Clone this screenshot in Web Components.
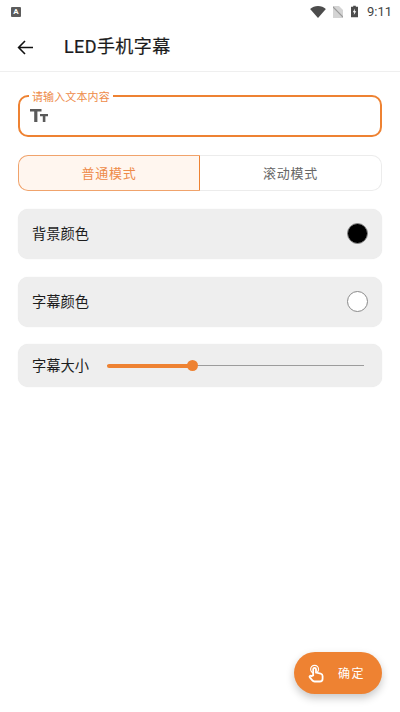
<!DOCTYPE html>
<html lang="zh">
<head>
<meta charset="utf-8">
<style>
  html, body { margin: 0; padding: 0; background: #ffffff; }
  body {
    width: 400px;
    height: 712px;
    overflow: hidden;
    display: flex;
    flex-direction: column;
    font-family: "Roboto", "Noto Sans CJK SC", sans-serif;
  }
  app-content { flex: 1; }
</style>
</head>
<body>
<status-bar></status-bar>
<app-bar>LED手机字幕</app-bar>
<app-content>
  <text-field label="请输入文本内容"></text-field>
  <mode-switch first="普通模式" second="滚动模式"></mode-switch>
  <color-row swatch="#000000">背景颜色</color-row>
  <color-row swatch="#ffffff" style="margin-bottom:17px">字幕颜色</color-row>
  <size-row value="33">字幕大小</size-row>
</app-content>
<confirm-fab>确定</confirm-fab>

<script>
class StatusBar extends HTMLElement {
  connectedCallback() {
    this.attachShadow({ mode: 'open' });
    this.shadowRoot.innerHTML = `
      <style>
        :host { display: flex; height: 23px; padding: 0 8px 0 11px; align-items: center; justify-content: space-between; color: #4a4a4a; }
        .right { display: flex; align-items: center; }
        .note { width: 10px; height: 10px; border-radius: 1px; background: #5c5c5c; color: #fff; font: 700 8px/10px "Roboto", sans-serif; text-align: center; }
        .time { font: 400 13px/16px "Roboto", sans-serif; color: #444; margin-left: 9px; }
        svg { display: block; }
      </style>
      <div class="note">A</div>
      <div class="right">
        <svg width="16" height="12" viewBox="0 0 17 13" style="margin-right:7px"><path d="M0 3.2C2.3 1.2 5.2 0 8.5 0s6.2 1.2 8.5 3.2L8.5 13z" fill="#4c4c4c"/></svg>
        <svg width="10" height="12" viewBox="0 0 10 12" style="margin-right:8px"><path d="M0 0h6l4 4v8H0z" fill="#d4d4d4"/><path d="M0 1l10 10" stroke="#9a9a9a" stroke-width="1.2"/></svg>
        <svg width="7" height="13" viewBox="0 0 8 13"><path d="M2.5 0h3v1H8v12H0V1h2.5z" fill="#4c4c4c"/><path d="M4.6 3 2 7.4h1.7L3.2 10.6 6 6.2H4.2z" fill="#fff"/></svg>
        <span class="time">9:11</span>
      </div>
    `;
  }
}

class AppBar extends HTMLElement {
  connectedCallback() {
    this.attachShadow({ mode: 'open' });
    this.shadowRoot.innerHTML = `
      <style>
        :host { display: flex; align-items: center; height: 48px; border-bottom: 1px solid #efefef; }
        button { border: 0; background: none; padding: 0; margin-left: 17px; width: 17px; height: 17px; }
        svg { display: block; }
        .title { margin-left: 30px; font: 400 18px/24px "Roboto", "Noto Sans CJK SC", sans-serif; -webkit-text-stroke: 0.2px #1c1c1c; color: #1c1c1c; letter-spacing: 0.4px; }
      </style>
      <button type="button" aria-label="back">
        <svg width="17" height="17" viewBox="0 0 17 17" fill="none" stroke="#111" stroke-width="1.6"><path d="M16 8.5H1.6M8 2 1.6 8.5 8 15"/></svg>
      </button>
      <div class="title"><slot></slot></div>
    `;
  }
}

class AppContent extends HTMLElement {
  connectedCallback() {
    this.attachShadow({ mode: 'open' });
    this.shadowRoot.innerHTML = `
      <style>
        :host { display: flex; flex-direction: column; padding: 23px 18px 0; }
      </style>
      <slot></slot>
    `;
  }
}

class TextField extends HTMLElement {
  connectedCallback() {
    this.attachShadow({ mode: 'open' });
    this.shadowRoot.innerHTML = `
      <style>
        :host { display: block; position: relative; height: 42px; border: 2px solid #ee8232; border-radius: 10px; box-sizing: border-box; margin-bottom: 18px; }
        .label { position: absolute; left: 9px; top: -8px; padding: 0 3px; background: #fff; font: 400 11px/14px "Noto Sans CJK SC", sans-serif; letter-spacing: 0.12px; color: #ee8a48; }
        .icon { display: flex; height: 100%; padding: 0 0 1px 10px; box-sizing: border-box; align-items: center; }
        svg { display: block; }
      </style>
      <div class="label">${this.getAttribute('label')}</div>
      <div class="icon">
        <svg width="18" height="13" viewBox="0 0 18 13" fill="#5a5a5a"><path d="M0 0h11.5v2.6H7.4V13H4.2V2.6H0zM10 5h8v2.2h-2.6V13h-2.6V7.2H10z"/></svg>
      </div>
    `;
  }
}

class ModeSwitch extends HTMLElement {
  connectedCallback() {
    this.attachShadow({ mode: 'open' });
    this.shadowRoot.innerHTML = `
      <style>
        :host { display: flex; height: 36px; margin-bottom: 18px; font: 400 13px/34px "Noto Sans CJK SC", sans-serif; letter-spacing: 0.7px; text-align: center; }
        div { box-sizing: border-box; height: 36px; }
        .on { width: 182px; border: 1px solid #f0a36c; border-right-color: #ee8232; border-radius: 10px 0 0 10px; background: #fff6ef; color: #ee8a48; }
        .off { flex: 1; border: 1px solid #ececec; border-left: 0; border-radius: 0 10px 10px 0; background: #fff; color: #666; }
      </style>
      <div class="on">${this.getAttribute('first')}</div>
      <div class="off">${this.getAttribute('second')}</div>
    `;
  }
}

class ColorRow extends HTMLElement {
  connectedCallback() {
    this.attachShadow({ mode: 'open' });
    const swatch = this.getAttribute('swatch');
    this.shadowRoot.innerHTML = `
      <style>
        :host { display: flex; align-items: center; justify-content: space-between; height: 50px; padding: 0 14px; margin-bottom: 18px; border-radius: 10px; background: #eeeeee; box-sizing: border-box; box-shadow: 0 0 1px rgba(0,0,0,0.12); font: 400 14.25px/20px "Noto Sans CJK SC", sans-serif; color: #1d1d1d; }
        .text { margin-top: -2px; }
        .dot { width: 21px; height: 21px; margin-top: -2px; border-radius: 50%; box-sizing: border-box; border: 1px solid #8a8a8a; background: ${swatch}; }
      </style>
      <div class="text"><slot></slot></div>
      <div class="dot"></div>
    `;
  }
}

class SizeRow extends HTMLElement {
  connectedCallback() {
    this.attachShadow({ mode: 'open' });
    const value = this.getAttribute('value');
    this.shadowRoot.innerHTML = `
      <style>
        :host { display: flex; align-items: center; height: 43px; padding: 0 18px 0 14px; border-radius: 10px; background: #eeeeee; box-sizing: border-box; box-shadow: 0 0 1px rgba(0,0,0,0.12); font: 400 14.25px/20px "Noto Sans CJK SC", sans-serif; color: #1d1d1d; }
        .text { margin-top: -1px; }
        .track { position: relative; flex: 1; margin-left: 18px; height: 1px; background: #9c9c9c; }
        .fill { position: absolute; left: 0; top: -1.5px; height: 4px; width: ${value}%; border-radius: 2px; background: #ee8232; }
        .thumb { position: absolute; left: ${value}%; top: -5px; margin-left: -5px; width: 11px; height: 11px; border-radius: 50%; background: #ee8232; }
      </style>
      <div class="text"><slot></slot></div>
      <div class="track"><div class="fill"></div><div class="thumb"></div></div>
    `;
  }
}

class ConfirmFab extends HTMLElement {
  connectedCallback() {
    this.attachShadow({ mode: 'open' });
    this.shadowRoot.innerHTML = `
      <style>
        :host { display: flex; align-items: center; position: absolute; left: 294px; top: 652px; width: 88px; height: 42px; border-radius: 21px; background: #ee8232; box-shadow: 0 4px 8px rgba(0,0,0,0.22); color: #fff; font: 400 12px/16px "Noto Sans CJK SC", sans-serif; letter-spacing: 1.4px; box-sizing: border-box; padding-left: 14px; }
        svg { display: block; margin-right: 14px; }
      </style>
      <svg width="16" height="19" viewBox="0 0 17 20" fill="none" stroke="#fff" stroke-width="1.9">
        <circle cx="7" cy="5.5" r="4.2" stroke-width="1.2"/>
        <path d="M5.5 12V5.5a1.5 1.5 0 0 1 3 0V9l5 1.2c1.2.3 2 1.2 2 2.5V15.5c0 1.7-1.3 3-3 3H7c-1 0-1.8-.4-2.4-1.2L1.8 14c-.6-1 .8-2.2 1.8-1.2z" fill="#ee8232"/>
      </svg>
      <slot></slot>
    `;
  }
}

customElements.define('status-bar', StatusBar);
customElements.define('app-bar', AppBar);
customElements.define('app-content', AppContent);
customElements.define('text-field', TextField);
customElements.define('mode-switch', ModeSwitch);
customElements.define('color-row', ColorRow);
customElements.define('size-row', SizeRow);
customElements.define('confirm-fab', ConfirmFab);
</script>
</body>
</html>
